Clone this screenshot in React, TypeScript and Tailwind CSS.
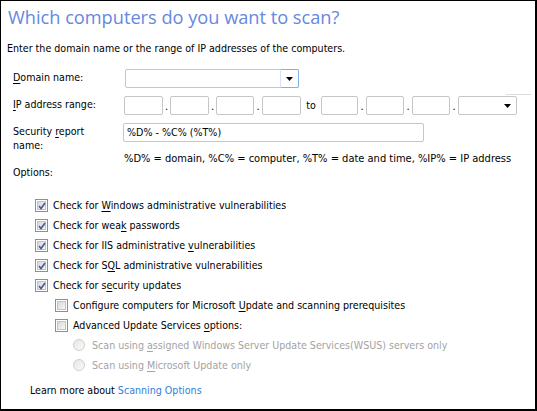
import React from "react";

const F = { fontFamily: '"DejaVu Sans Condensed", "DejaVu Sans", sans-serif' };

function Check({ checked }: { checked?: boolean }) {
  return (
    <span className="relative inline-flex h-[13px] w-[13px] shrink-0 items-center justify-center border border-[#8f8f8f] bg-white">
      <span className="h-[9px] w-[9px] border border-[#c4c4c4] bg-gradient-to-br from-[#d8d8d8] to-[#f7f7f7]" />
      {checked && (
        <svg className="absolute left-[1px] top-[1px]" width="10" height="10" viewBox="0 0 10 10">
          <path d="M2 5 L4 7.5 L8 2" fill="none" stroke="#4a5d94" strokeWidth="1.7" />
        </svg>
      )}
    </span>
  );
}

function Radio() {
  return (
    <span className="inline-block h-[12px] w-[12px] shrink-0 rounded-full border border-[#cfcfcf] bg-gradient-to-br from-[#e6e6e6] to-[#fafafa]" />
  );
}

function Arrow() {
  return (
    <svg width="7" height="4" viewBox="0 0 7 4">
      <path d="M0 0 H7 L3.5 4 Z" fill="#000" />
    </svg>
  );
}

function U({ children }: { children: React.ReactNode }) {
  return <span className="underline underline-offset-[2px]">{children}</span>;
}

function IpBox({ w = 39 }: { w?: number }) {
  return <span className="h-[19px] shrink-0 rounded-[2px] border border-[#c6c6c6] bg-white" style={{ width: w }} />;
}

function Dot({ w = 7 }: { w?: number }) {
  return (
    <span className="flex items-end justify-center pb-[3px] text-[11px] leading-none" style={{ width: w }}>
      .
    </span>
  );
}

function CheckRow({ checked, children, indent }: { checked?: boolean; children: React.ReactNode; indent?: boolean }) {
  return (
    <div className={`flex h-[20px] items-center gap-[5px] ${indent ? "pl-[54px]" : "pl-[34px]"}`}>
      <Check checked={checked} />
      <span>{children}</span>
    </div>
  );
}

export default function App() {
  return (
    <div
      className="relative h-[411px] w-[537px] overflow-hidden border-b-2 border-l border-r-2 border-t border-black bg-white text-[10.6px] leading-[13px] text-black"
      style={F}
    >
      <span className="absolute left-[505px] top-[93px] h-px w-[25px] bg-[#dcdcdc]" />
      <div
        className="pl-[7px] pt-[4px] text-[18.2px] leading-[24px] text-[#6688e0]"
        style={{ fontFamily: '"Open Sans", "Noto Sans", sans-serif' }}
      >
        Which computers do you want to scan?
      </div>
      <div className="mt-[13px] pl-[6px]">Enter the domain name or the range of IP addresses of the computers.</div>

      <div className="mt-[14px] flex pl-[12px]">
        <div className="w-[112px] pt-[2px]">
          <U>D</U>omain name:
        </div>
        <div className="flex h-[19px] w-[174px] items-center justify-end rounded-[2px] border border-[#c6c6c6]">
          <div className="flex h-[19px] w-[19px] -mr-px items-center justify-center rounded-r-[2px] border border-[#7fb2e5] border-l-[#d4e4f5]">
            <Arrow />
          </div>
        </div>
      </div>

      <div className="mt-[8px] flex pl-[12px]">
        <div className="w-[111px] pt-[2px]">
          <U>I</U>P address range:
        </div>
        <div className="flex items-stretch">
          <IpBox />
          <Dot />
          <IpBox />
          <Dot />
          <IpBox w={38} />
          <Dot w={8} />
          <IpBox />
          <span className="flex w-[20px] items-center justify-center">to</span>
          <IpBox w={37} />
          <Dot w={8} />
          <IpBox w={38} />
          <Dot w={8} />
          <IpBox w={38} />
          <Dot w={8} />
          <div className="flex h-[19px] w-[59px] items-center justify-end rounded-[2px] border border-[#c6c6c6] pr-[5px]">
            <Arrow />
          </div>
        </div>
      </div>

      <div className="mt-[8px] flex pl-[12px]">
        <div className="w-[110px] pt-[1px] leading-[14px]">
          Security <U>r</U>eport
          <br />
          name:
        </div>
        <div className="flex h-[19px] w-[301px] items-center rounded-[2px] border border-[#c6c6c6] pl-[3px]">
          %D% - %C% (%T%)
        </div>
      </div>

      <div className="mt-0 pl-[123px] text-[11px]">%D% = domain, %C% = computer, %T% = date and time, %IP% = IP address</div>
      <div className="mt-[1px] pl-[12px]">Options:</div>

      <div className="mt-[16px]">
        <CheckRow checked>
          Check for <U>W</U>indows administrative vulnerabilities
        </CheckRow>
        <CheckRow checked>
          Check for wea<U>k</U> passwords
        </CheckRow>
        <CheckRow checked>
          Check for IIS administrative <U>v</U>ulnerabilities
        </CheckRow>
        <CheckRow checked>
          Check for S<U>Q</U>L administrative vulnerabilities
        </CheckRow>
        <CheckRow checked>
          Check for s<U>e</U>curity updates
        </CheckRow>
        <CheckRow indent>
          Configure computers for Microsoft <U>U</U>pdate and scanning prerequisites
        </CheckRow>
        <CheckRow indent>
          Advanced Update Services <U>o</U>ptions:
        </CheckRow>
        <div className="flex h-[20px] items-center gap-[7px] pl-[72px] text-[#a3a3a3]">
          <Radio />
          <span>
            Scan using <U>a</U>ssigned Windows Server Update Services(WSUS) servers only
          </span>
        </div>
        <div className="flex h-[20px] items-center gap-[7px] pl-[72px] text-[#a3a3a3]">
          <Radio />
          <span>
            Scan using <U>M</U>icrosoft Update only
          </span>
        </div>
      </div>

      <div className="mt-[9px] pl-[29px]">
        Learn more about <span className="text-[#2f7fd8]">Scanning Options</span>
      </div>
    </div>
  );
}
